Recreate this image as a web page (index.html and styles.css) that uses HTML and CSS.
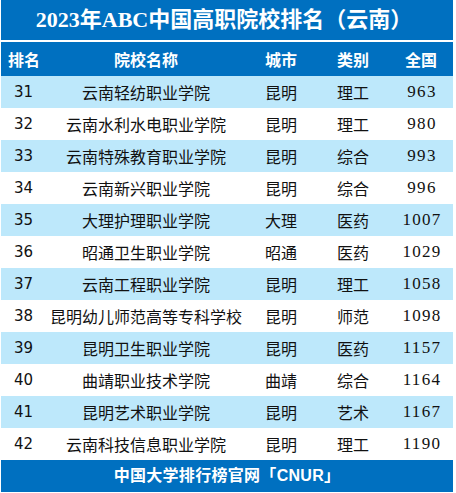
FILE: index.html
```html
<!DOCTYPE html>
<html>
<head>
	<title>2023年ABC中国高职院校排名（云南）</title>
	<meta charset="utf-8">
	<link rel="stylesheet" href="styles.css">
</head>
<body>
<div class="wrap">
	<div class="title">2023年ABC中国高职院校排名（云南）</div>
	<table class="rank">
		<colgroup>
			<col class="c-rank">
			<col class="c-name">
			<col class="c-city">
			<col class="c-type">
			<col class="c-all">
		</colgroup>
		<thead>
			<tr><th>排名</th><th>院校名称</th><th>城市</th><th>类别</th><th>全国</th></tr>
		</thead>
		<tbody>
			<tr><td class="no">31</td><td>云南轻纺职业学院</td><td>昆明</td><td>理工</td><td class="num">963</td></tr>
			<tr><td class="no">32</td><td>云南水利水电职业学院</td><td>昆明</td><td>理工</td><td class="num">980</td></tr>
			<tr><td class="no">33</td><td>云南特殊教育职业学院</td><td>昆明</td><td>综合</td><td class="num">993</td></tr>
			<tr><td class="no">34</td><td>云南新兴职业学院</td><td>昆明</td><td>综合</td><td class="num">996</td></tr>
			<tr><td class="no">35</td><td>大理护理职业学院</td><td>大理</td><td>医药</td><td class="num">1007</td></tr>
			<tr><td class="no">36</td><td>昭通卫生职业学院</td><td>昭通</td><td>医药</td><td class="num">1029</td></tr>
			<tr><td class="no">37</td><td>云南工程职业学院</td><td>昆明</td><td>理工</td><td class="num">1058</td></tr>
			<tr><td class="no">38</td><td>昆明幼儿师范高等专科学校</td><td>昆明</td><td>师范</td><td class="num">1098</td></tr>
			<tr><td class="no">39</td><td>昆明卫生职业学院</td><td>昆明</td><td>医药</td><td class="num">1157</td></tr>
			<tr><td class="no">40</td><td>曲靖职业技术学院</td><td>曲靖</td><td>综合</td><td class="num">1164</td></tr>
			<tr><td class="no">41</td><td>昆明艺术职业学院</td><td>昆明</td><td>艺术</td><td class="num">1167</td></tr>
			<tr><td class="no">42</td><td>云南科技信息职业学院</td><td>昆明</td><td>理工</td><td class="num">1190</td></tr>
		</tbody>
	</table>
	<div class="foot">中国大学排行榜官网「CNUR」</div>
</div>
</body>
</html>
```

FILE: styles.css
```css
body{
	margin: 0;
	background-color: #fff;
	font-family: "Liberation Sans", "Noto Sans CJK SC", sans-serif;
}
.wrap{
	width: 452px;
	margin-left: 1px;
}
.title{
	height: 40px;
	background-color: #0070c0;
	color: #fff;
	text-align: center;
	font: bold 22px/40px "Liberation Serif", "Noto Sans CJK SC", serif;
	margin-bottom: 2px;
	padding-right: 6px;
}
.rank{
	width: 452px;
	border-collapse: collapse;
	table-layout: fixed;
}
.c-rank{ width: 46px; }
.c-name{ width: 198px; }
.c-city{ width: 72px; }
.c-type{ width: 72px; }
.c-all{ width: 64px; }
.rank th{
	height: 34px;
	padding: 0;
	background-color: #0070c0;
	color: #fff;
	font-size: 16px;
	font-weight: bold;
	text-align: center;
}
.rank td{
	height: 32px;
	padding: 0;
	font-size: 16px;
	color: #111;
	text-align: center;
	white-space: nowrap;
}
.rank tbody tr:nth-child(odd){
	background-color: #bde8fb;
}
.rank td.no{
	text-align: left;
	padding-left: 13px;
	font-family: "DejaVu Sans", sans-serif;
	font-size: 15px;
}
.rank td.num{
	font-family: "Liberation Serif", serif;
	font-size: 17px;
	letter-spacing: 1.3px;
	padding-left: 2px;
}
.foot{
	height: 32px;
	line-height: 32px;
	background-color: #0070c0;
	color: #fff;
	text-align: center;
	font-size: 16px;
	font-weight: bold;
	letter-spacing: 0.3px;
}
```
